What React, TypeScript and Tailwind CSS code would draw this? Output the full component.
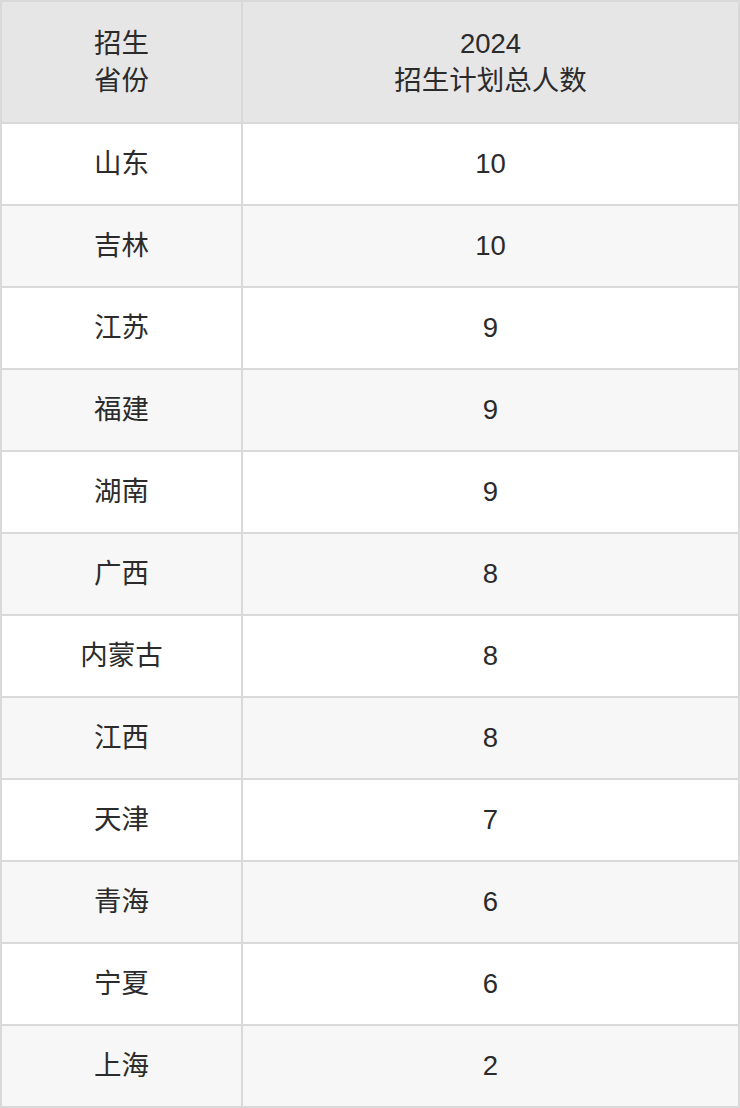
import React from "react";

const rows: [string, string][] = [
  ["山东", "10"],
  ["吉林", "10"],
  ["江苏", "9"],
  ["福建", "9"],
  ["湖南", "9"],
  ["广西", "8"],
  ["内蒙古", "8"],
  ["江西", "8"],
  ["天津", "7"],
  ["青海", "6"],
  ["宁夏", "6"],
  ["上海", "2"],
];

export default function App() {
  return (
    <div
      className="w-[740px] bg-white text-[#2b2b2b] text-[27.5px]"
      style={{ fontFamily: '"Liberation Sans", "Noto Sans CJK SC", sans-serif' }}
    >
      <div className="grid grid-cols-[239px_1fr] gap-[2px] bg-[#d9d9d9] p-[2px]">
        <div className="bg-[#e6e6e6] h-[120px] flex flex-col items-center justify-center leading-[37px] text-center">
          <div>招生</div>
          <div>省份</div>
        </div>
        <div className="bg-[#e6e6e6] h-[120px] flex flex-col items-center justify-center leading-[37px] text-center">
          <div>2024</div>
          <div>招生计划总人数</div>
        </div>
        {rows.map(([p, n], i) => (
          <React.Fragment key={p + i}>
            <div
              className={`${i % 2 === 0 ? "bg-white" : "bg-[#f7f7f7]"} h-[80px] flex items-center justify-center`}
            >
              {p}
            </div>
            <div
              className={`${i % 2 === 0 ? "bg-white" : "bg-[#f7f7f7]"} h-[80px] flex items-center justify-center`}
            >
              {n}
            </div>
          </React.Fragment>
        ))}
      </div>
    </div>
  );
}
